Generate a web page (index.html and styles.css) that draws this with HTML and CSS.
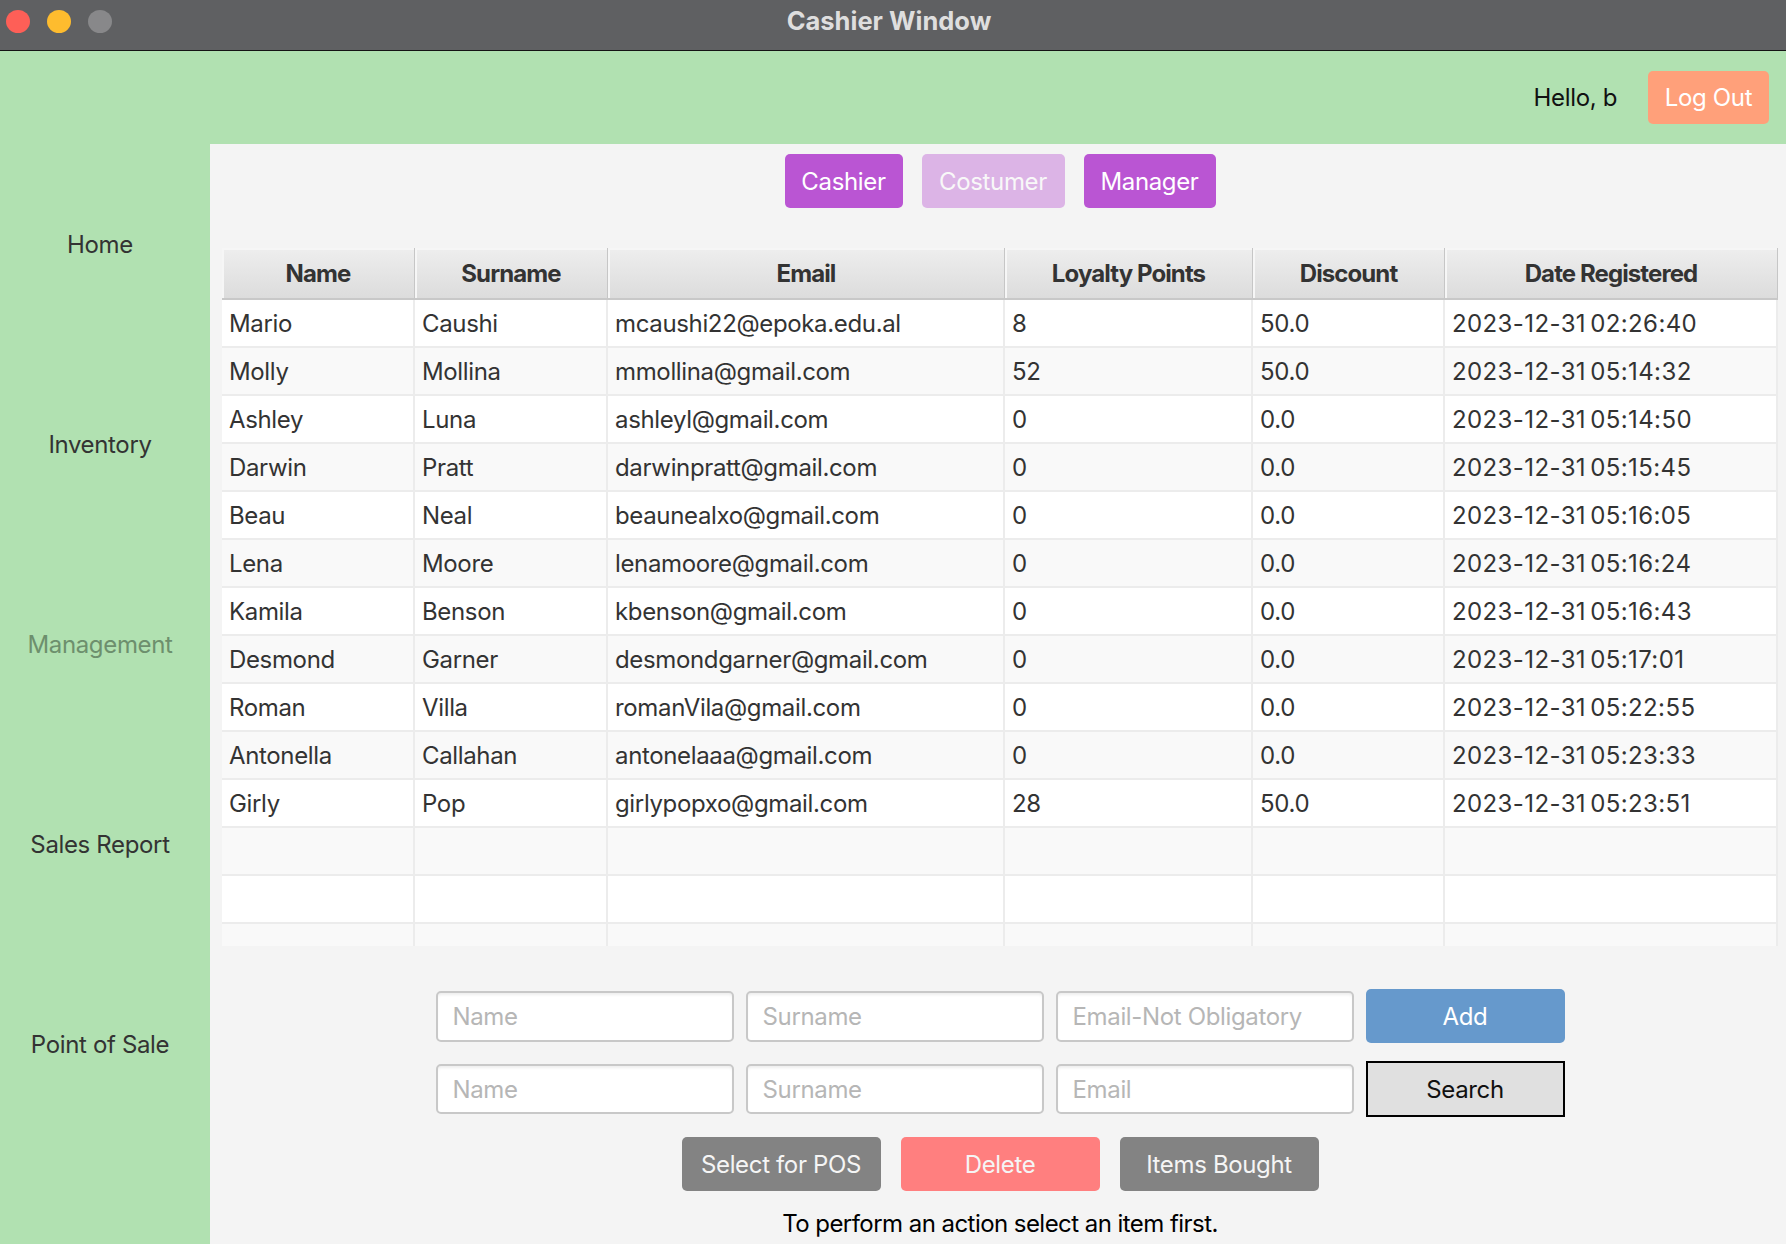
FILE: index.html
```html
<!DOCTYPE html>
<html lang="en">
<head>
<meta charset="utf-8">
<title>Cashier Window</title>
<link rel="stylesheet" href="styles.css">
</head>
<body>
<div class="window">
  <header class="titlebar">
    <div class="lights">
      <span class="light red"></span>
      <span class="light yellow"></span>
      <span class="light gray"></span>
    </div>
    <div class="title">Cashier Window</div>
    <div class="spacer"></div>
  </header>
  <div class="app">
    <div class="topbar">
      <span class="hello">Hello, b</span>
      <button class="btn logout">Log Out</button>
    </div>
    <nav class="sidebar">
      <div class="nav-item">Home</div>
      <div class="nav-item">Inventory</div>
      <div class="nav-item active">Management</div>
      <div class="nav-item">Sales Report</div>
      <div class="nav-item">Point of Sale</div>
    </nav>
    <main class="panel">
      <div class="roles">
        <button class="btn role role-cashier">Cashier</button>
        <button class="btn role role-costumer disabled">Costumer</button>
        <button class="btn role role-manager">Manager</button>
      </div>
      <div class="table-wrap">
        <table class="grid">
          <colgroup>
            <col class="c-name"><col class="c-surname"><col class="c-email"><col class="c-points"><col class="c-discount"><col class="c-date">
          </colgroup>
          <thead>
            <tr><th>Name</th><th>Surname</th><th>Email</th><th>Loyalty Points</th><th>Discount</th><th>Date Registered</th></tr>
          </thead>
          <tbody>
            <tr><td>Mario</td><td>Caushi</td><td>mcaushi22@epoka.edu.al</td><td>8</td><td>50.0</td><td class="date">2023-12-31 02:26:40</td></tr>
            <tr><td>Molly</td><td>Mollina</td><td>mmollina@gmail.com</td><td>52</td><td>50.0</td><td class="date">2023-12-31 05:14:32</td></tr>
            <tr><td>Ashley</td><td>Luna</td><td>ashleyl@gmail.com</td><td>0</td><td>0.0</td><td class="date">2023-12-31 05:14:50</td></tr>
            <tr><td>Darwin</td><td>Pratt</td><td>darwinpratt@gmail.com</td><td>0</td><td>0.0</td><td class="date">2023-12-31 05:15:45</td></tr>
            <tr><td>Beau</td><td>Neal</td><td>beaunealxo@gmail.com</td><td>0</td><td>0.0</td><td class="date">2023-12-31 05:16:05</td></tr>
            <tr><td>Lena</td><td>Moore</td><td>lenamoore@gmail.com</td><td>0</td><td>0.0</td><td class="date">2023-12-31 05:16:24</td></tr>
            <tr><td>Kamila</td><td>Benson</td><td>kbenson@gmail.com</td><td>0</td><td>0.0</td><td class="date">2023-12-31 05:16:43</td></tr>
            <tr><td>Desmond</td><td>Garner</td><td>desmondgarner@gmail.com</td><td>0</td><td>0.0</td><td class="date">2023-12-31 05:17:01</td></tr>
            <tr><td>Roman</td><td>Villa</td><td>romanVila@gmail.com</td><td>0</td><td>0.0</td><td class="date">2023-12-31 05:22:55</td></tr>
            <tr><td>Antonella</td><td>Callahan</td><td>antonelaaa@gmail.com</td><td>0</td><td>0.0</td><td class="date">2023-12-31 05:23:33</td></tr>
            <tr><td>Girly</td><td>Pop</td><td>girlypopxo@gmail.com</td><td>28</td><td>50.0</td><td class="date">2023-12-31 05:23:51</td></tr>
            <tr><td></td><td></td><td></td><td></td><td></td><td></td></tr>
            <tr><td></td><td></td><td></td><td></td><td></td><td></td></tr>
            <tr><td></td><td></td><td></td><td></td><td></td><td></td></tr>
          </tbody>
        </table>
      </div>
      <div class="form-row row-add">
        <input class="field" type="text" placeholder="Name">
        <input class="field" type="text" placeholder="Surname">
        <input class="field" type="text" placeholder="Email-Not Obligatory">
        <button class="btn add">Add</button>
      </div>
      <div class="form-row row-search">
        <input class="field" type="text" placeholder="Name">
        <input class="field" type="text" placeholder="Surname">
        <input class="field" type="text" placeholder="Email">
        <button class="btn search">Search</button>
      </div>
      <div class="actions">
        <button class="btn action gray-btn">Select for POS</button>
        <button class="btn action delete">Delete</button>
        <button class="btn action gray-btn">Items Bought</button>
      </div>
      <p class="message">To perform an action select an item first.</p>
    </main>
  </div>
</div>
</body>
</html>
```

FILE: styles.css
```css
* { box-sizing: border-box; }

html, body {
  margin: 0;
  padding: 0;
}

body {
  width: 1786px;
  height: 1244px;
  overflow: hidden;
  font-family: Inter, "Noto Sans", "Liberation Sans", sans-serif;
  color: #333;
  background: #b1e1b1;
  letter-spacing: -0.35px;
}

.window {
  display: flex;
  flex-direction: column;
  height: 1244px;
}

/* ---- title bar ---- */
.titlebar {
  height: 51px;
  flex: none;
  background: #5f6062;
  border-bottom: 1px solid #141414;
  display: grid;
  grid-template-columns: 1fr auto 1fr;
  align-items: start;
  letter-spacing: 0;
}

.lights {
  display: flex;
  gap: 17px;
  padding: 10px 0 0 6px;
}

.light {
  width: 24px;
  height: 23px;
  border-radius: 50%;
  display: block;
}
.light.red { background: #fe5f57; }
.light.yellow { background: #febc2e; }
.light.gray { background: #88888a; }

.title {
  padding-top: 6px;
  line-height: 30px;
  font-size: 25.5px;
  font-weight: 700;
  color: #dedede;
  margin-right: 8px;
}

/* ---- app layout ---- */
.app {
  flex: 1;
  display: grid;
  grid-template-columns: 210px 1fr;
  grid-template-rows: 93px 1fr;
  min-height: 0;
}

.topbar {
  grid-column: 1 / 3;
  display: flex;
  align-items: center;
  justify-content: flex-end;
  padding-right: 17px;
  gap: 31px;
}

.hello {
  font-size: 24px;
  color: #111;
}

.btn {
  font-family: Inter, "Noto Sans", "Liberation Sans", sans-serif;
  font-size: 24px;
  letter-spacing: -0.35px;
  border: none;
  border-radius: 5px;
  color: #fff;
  padding: 0;
  cursor: pointer;
}

.logout {
  width: 121px;
  height: 53px;
  background: #ffa07a;
}

/* ---- sidebar ---- */
.sidebar {
  display: flex;
  flex-direction: column;
  padding-right: 10px;
}

.nav-item {
  height: 200px;
  display: flex;
  align-items: center;
  justify-content: center;
  font-size: 24px;
  color: #333;
  padding-top: 1px;
}

.nav-item.active {
  color: #6d8f6d;
}

/* ---- panel ---- */
.panel {
  background: #f4f4f4;
  display: flex;
  flex-direction: column;
  align-items: center;
  padding: 10px 0 0 4px;
  min-height: 0;
  overflow: hidden;
}

.roles {
  display: flex;
  gap: 19px;
}

.role {
  height: 54px;
  background: #ba55d3;
}
.role-cashier { width: 118px; }
.role-costumer { width: 143px; }
.role-manager { width: 132px; }
.role.disabled { opacity: 0.4; }

/* ---- table ---- */
.table-wrap {
  align-self: stretch;
  margin: 40px 8px 0 8px;
  height: 698px;
  overflow: hidden;
  background: #f9f9f9;
}

.grid {
  table-layout: fixed;
  border-collapse: separate;
  border-spacing: 0;
  width: 1556px;
}

.c-name { width: 193px; }
.c-surname { width: 193px; }
.c-email { width: 397px; }
.c-points { width: 248px; }
.c-discount { width: 192px; }
.c-date { width: 333px; }

.grid th {
  height: 52px;
  padding: 0;
  font-size: 24px;
  font-weight: 700;
  letter-spacing: -0.9px;
  color: #333;
  text-align: center;
  background: linear-gradient(#eeeeee, #dcdcdc);
  border-right: 1px solid #c6c6c6;
  border-bottom: 2px solid #c8c8c8;
  box-shadow: inset 2px 2px 0 #f6f6f6;
}

.grid td {
  height: 48px;
  padding: 0 0 0 7px;
  font-size: 24px;
  color: #333;
  white-space: nowrap;
  overflow: hidden;
  border-right: 2px solid #ececec;
  border-bottom: 2px solid #ececec;
  background: #ffffff;
}

.grid td.date {
  letter-spacing: 0.4px;
  word-spacing: -3px;
}

.grid tbody tr:nth-child(even) td {
  background: #f9f9f9;
}

/* ---- forms ---- */
.form-row {
  display: flex;
  align-items: center;
  gap: 12px;
}

.row-add {
  margin-top: 43px;
  height: 54px;
}

.row-search {
  margin-top: 18px;
  height: 56px;
}

.field {
  width: 298px;
  height: 51px;
  font-family: Inter, "Noto Sans", "Liberation Sans", sans-serif;
  font-size: 24px;
  letter-spacing: -0.35px;
  color: #333;
  background: #fff;
  border: 2px solid #c8c8c8;
  border-radius: 5px;
  padding: 0 0 0 15px;
  box-shadow: inset 0 3px 3px -1px rgba(0, 0, 0, 0.07);
  outline: none;
}

.row-search .field {
  height: 50px;
}

.field::placeholder {
  color: #b6b6b6;
}

.add {
  width: 199px;
  height: 54px;
  background: #6699cc;
}

.search {
  width: 199px;
  height: 56px;
  background: #e0e0e0;
  color: #111;
  border: 2px solid #000;
  border-radius: 0;
}

.actions {
  display: flex;
  gap: 20px;
  margin-top: 20px;
}

.action {
  width: 199px;
  height: 54px;
  color: #f5f5f5;
}

.gray-btn { background: #838383; }
.delete { background: #ff7f7f; }

.message {
  margin: 18px 0 0 0;
  font-size: 24px;
  line-height: 30px;
  letter-spacing: -0.55px;
  color: #000;
}
```
